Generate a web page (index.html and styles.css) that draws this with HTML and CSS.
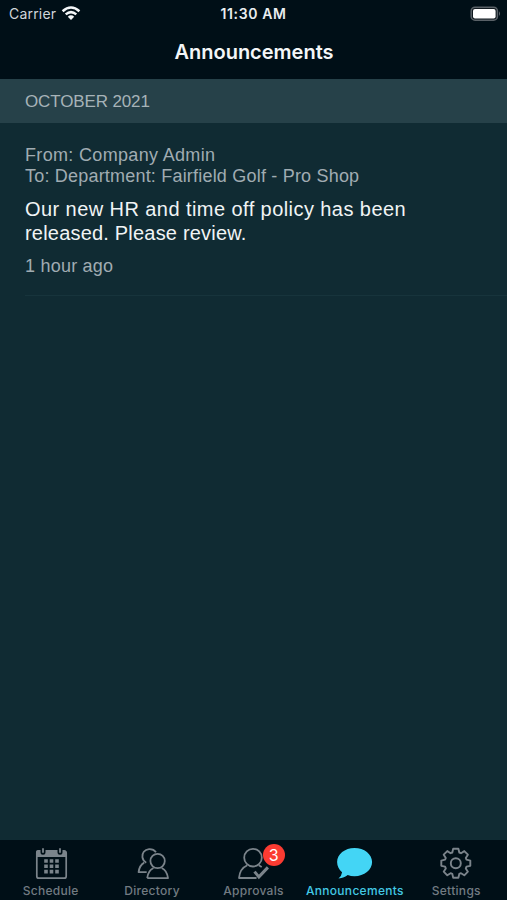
FILE: index.html
```html
<!DOCTYPE html>
<html lang="en">
<head>
<meta charset="utf-8">
<title>Announcements</title>
<link rel="stylesheet" href="styles.css">
</head>
<body>
<div class="app">
  <header class="top">
    <div class="status">
      <div class="carrier"><span>Carrier</span>
        <svg class="wifi" width="20" height="15" viewBox="0 0 20 15"><path d="M1.6 5.2Q10-2.2 18.4 5.2M4.7 8.4Q10 3.9 15.3 8.4" fill="none" stroke="#f4f7f9" stroke-width="2.5"/><path d="M6.8 10.7Q10 8 13.2 10.7L10 14Z" fill="#f4f7f9"/></svg>
      </div>
      <div class="clock"><span>11:30 AM</span></div>
      <svg class="battery" width="32" height="16" viewBox="0 0 32 16"><rect x="1.2" y="1.2" width="26.2" height="13" rx="3.8" fill="#10191f" stroke="#596167" stroke-width="1.5"/><rect x="3" y="3" width="22.6" height="9.4" rx="2" fill="#fff"/><path d="M29 5.2q2.2 2.4 0 4.8z" fill="#596167"/></svg>
    </div>
    <h1 class="title"><span>Announcements</span></h1>
  </header>
  <main class="feed">
    <h2 class="month"><span>OCTOBER 2021</span></h2>
    <article class="post">
      <p class="meta from">From: Company Admin</p>
      <p class="meta to">To: Department: Fairfield Golf - Pro Shop</p>
      <p class="message"><span class="line-a">Our new HR and time off policy has been</span><br><span class="line-b">released. Please review.</span></p>
      <p class="age">1 hour ago</p>
    </article>
  </main>
  <nav class="tabs">
    <a class="tab">
      <svg class="icon" viewBox="0 0 40 40"><rect x="5.8" y="7" width="29.4" height="27.2" rx="2" fill="none" stroke="#7b848b" stroke-width="1.7"/><path d="M5 13V8q0-2 2-2h26q2 0 2 2v5z" fill="#7b848b"/><path d="M12 5v3.2M29 5v3.2" stroke="#000f17" stroke-width="5" stroke-linecap="round"/><path d="M12 5v3M29 5v3" stroke="#7b848b" stroke-width="1.8" stroke-linecap="round"/><path d="M13.2 17h14.6M13.2 22.3h14.6M13.2 27.6h14.6" stroke="#7b848b" stroke-width="3.6" stroke-dasharray="3.6 1.9"/></svg>
      <span class="label schedule">Schedule</span>
    </a>
    <a class="tab">
      <svg class="icon" viewBox="0 0 40 40"><g fill="none" stroke="#7b848b" stroke-width="1.8" stroke-linejoin="round"><circle cx="25.6" cy="17" r="7.2"/><path d="M15.2 34.2q.8-7.6 6.3-10.2M29.7 24q5.5 2.6 6.3 10.2H15.2"/><path d="M24 8.2Q21.5 4.8 17 5.1C12.5 5.4 9.8 9.2 10.4 13.2Q10.8 16.5 14.2 18.7M12.2 18.6Q7.4 21.2 6.6 28.2h8.1"/></g></svg>
      <span class="label directory">Directory</span>
    </a>
    <a class="tab">
      <svg class="icon" viewBox="0 0 40 40"><g fill="none" stroke="#7b848b"><circle cx="20" cy="13.7" r="8.8" stroke-width="1.8"/><path d="M14.3 21.2Q6.8 24.5 6 34H23.5M25.7 21.2l3 1.8" stroke-width="1.8" stroke-linejoin="round"/><path d="M21.5 27.6l4.4 5.3 9-9.5" stroke-width="3"/></g></svg>
      <span class="badge">3</span>
      <span class="label approvals">Approvals</span>
    </a>
    <a class="tab active">
      <svg class="icon" viewBox="0 0 40 40"><path transform="translate(-.7 0)" d="M20.2 4C10.5 4 2.8 10.3 2.8 18c0 4.2 2 7.8 5 10.2q-.4 3.5-3.6 6.2c4.2-.1 7-1.6 9.2-3.4q3.1 1.2 6.8 1.2c9.7 0 17.6-6.4 17.6-14.2S29.9 4 20.2 4Z" fill="#43d5f5"/></svg>
      <span class="label announcements">Announcements</span>
    </a>
    <a class="tab">
      <svg class="icon" viewBox="0 0 40 40"><g transform="translate(19.8 19.2)" fill="none" stroke="#7b848b" stroke-width="1.9" stroke-linejoin="round"><circle r="5"/><path d="M-2.6-14.5H2.6L3.5-10.7 5.2-10 8.5-12.1 12.1-8.5 10-5.2 10.7-3.5 14.5-2.6V2.6L10.7 3.5 10 5.2 12.1 8.5 8.5 12.1 5.2 10 3.5 10.7 2.6 14.5H-2.6L-3.5 10.7-5.2 10-8.5 12.1-12.1 8.5-10 5.2-10.7 3.5-14.5 2.6V-2.6L-10.7-3.5-10-5.2-12.1-8.5-8.5-12.1-5.2-10-3.5-10.7Z"/></g></svg>
      <span class="label settings">Settings</span>
    </a>
  </nav>
</div>
</body>
</html>
```
FILE: styles.css
```css
* { box-sizing: border-box; }
body { margin: 0; background: #102b33; }
h1, h2, p { margin: 0; font-weight: 400; }
.app {
  width: 507px;
  height: 900px;
  display: flex;
  flex-direction: column;
  background: #102b33;
  font-family: "Liberation Sans", Arial, sans-serif;
  white-space: nowrap;
}
.top { height: 79px; flex: none; background: #000f17; font-family: Inter, sans-serif; }
.status {
  height: 27px;
  display: grid;
  grid-template-columns: 1fr auto 1fr;
  align-items: center;
  padding: 0 5px 0 9px;
}
.carrier { display: flex; align-items: center; gap: 5px; font-size: 14px; letter-spacing: .2px; color: #d0d6da; }
.clock { margin-right: 4px; font-size: 14px; font-weight: 600; letter-spacing: .6px; color: #e9edf0; }
.battery { justify-self: end; }
.title { height: 50px; line-height: 51px; padding-left: 1px; text-align: center; font-size: 20px; font-weight: 600; color: #f4f6f8; }
.feed { flex: 1; }
.month { height: 44px; line-height: 46px; padding-left: 25px; background: #264149; color: #a7b3b8; font-size: 17px; letter-spacing: -.13px; }
.post { margin-left: 25px; height: 173px; padding-top: 21.5px; border-bottom: 1px solid #17343c; }
.meta { font-size: 18px; line-height: 21.5px; color: #a0acb2; }
.from { letter-spacing: .33px; }
.to { letter-spacing: .2px; }
.message { margin-top: 9.5px; font-size: 20px; line-height: 24px; color: #f0f4f5; }
.line-a { letter-spacing: .43px; }
.line-b { letter-spacing: .2px; }
.age { margin-top: 10px; font-size: 18px; line-height: 22px; letter-spacing: .22px; color: #a0acb2; }
.tabs { height: 60px; flex: none; display: grid; grid-template-columns: repeat(5, 1fr); background: #000f17; }
.tab { position: relative; display: flex; flex-direction: column; align-items: center; padding-top: 4px; color: #727b82; }
.icon { width: 40px; height: 40px; flex: none; }
.label { font-family: Inter, sans-serif; font-size: 12px; font-weight: 500; line-height: 14px; letter-spacing: .3px; }
.active { color: #43c9e5; }
.badge {
  position: absolute;
  left: 60px;
  top: 4px;
  width: 22px;
  height: 22px;
  border-radius: 50%;
  background: #fb3b32;
  color: #fff;
  font: 16px/22px Inter, sans-serif;
  text-align: center;
}
```
